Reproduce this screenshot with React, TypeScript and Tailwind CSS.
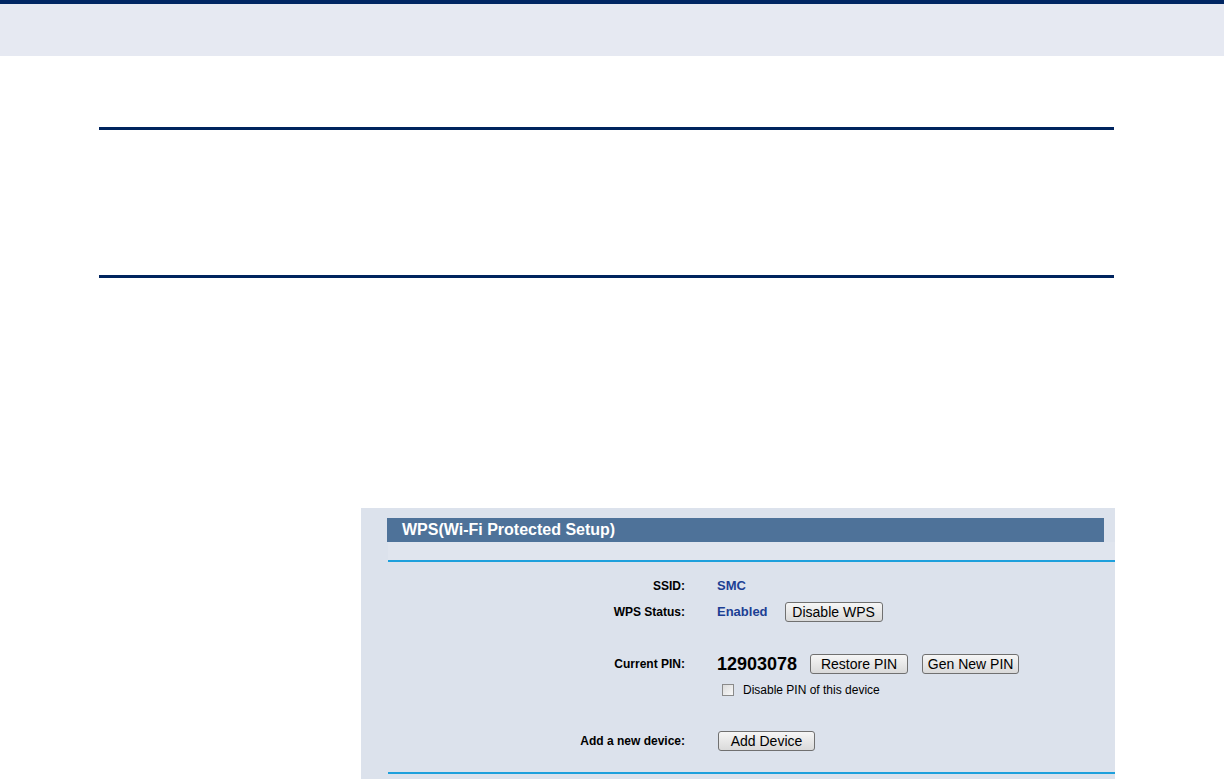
import React from 'react'

function Btn({ label, w }: { label: string; w: string }) {
  return (
    <button
      className={`${w} h-[20px] rounded-[3px] border border-[#707070] bg-gradient-to-b from-[#f6f6f6] to-[#dadada] text-[14px] leading-none text-black`}
    >
      {label}
    </button>
  )
}

function Row({ label, className, children }: { label: string; className: string; children?: React.ReactNode }) {
  return (
    <div className={`flex items-center ${className}`}>
      <div className="w-[324px] shrink-0 text-right text-[12px] font-bold text-black">{label}</div>
      <div className="ml-[32px] flex items-center">{children}</div>
    </div>
  )
}

export default function App() {
  return (
    <div className="min-h-[779px] bg-white font-['Liberation_Sans',Arial,sans-serif]">
      <div className="h-[4px] bg-[#002663]" />
      <div className="h-[52px] bg-[#e6e9f2]" />

      <div className="ml-[99px] mt-[71px] h-[3px] w-[1015px] bg-[#00245e]" />
      <div className="ml-[99px] mt-[145px] h-[3px] w-[1015px] bg-[#00245e]" />

      <div className="ml-[361px] mt-[230px] h-[271px] w-[754px] bg-[#dce2ec] pt-[10px]">
        <div className="ml-[26px] flex h-[24px] w-[717px] items-center bg-[#4e7299] pl-[15px] text-[16px] font-bold text-white">
          WPS(Wi-Fi Protected Setup)
        </div>
        <div className="ml-[27px] h-[18px] bg-[#e0e5ee]" />
        <div className="ml-[27px] h-[2px] bg-[#1ea0dc]" />

        <Row label="SSID:" className="mt-[14px] h-[20px]">
          <span className="text-[13px] font-bold text-[#1c3f94]">SMC</span>
        </Row>
        <Row label="WPS Status:" className="mt-[6px] h-[20px]">
          <span className="text-[13px] font-bold text-[#1c3f94]">Enabled</span>
          <span className="ml-[17px]">
            <Btn label="Disable WPS" w="w-[98px]" />
          </span>
        </Row>
        <Row label="Current PIN:" className="mt-[32px] h-[20px]">
          <span className="text-[18px] font-bold text-black">12903078</span>
          <span className="ml-[13px]">
            <Btn label="Restore PIN" w="w-[98px]" />
          </span>
          <span className="ml-[14px]">
            <Btn label="Gen New PIN" w="w-[97px]" />
          </span>
        </Row>
        <Row label="" className="mt-[7px] h-[18px]">
          <span className="ml-[5px] h-[12px] w-[12px] border border-[#8a8a8a] bg-gradient-to-br from-[#dcdcdc] to-[#f8f8f8]" />
          <span className="ml-[9px] text-[12px] text-black">Disable PIN of this device</span>
        </Row>
        <Row label="Add a new device:" className="mt-[32px] h-[20px]">
          <span className="ml-[1px]">
            <Btn label="Add Device" w="w-[97px]" />
          </span>
        </Row>
        <div className="ml-[27px] mt-[21px] h-[2px] bg-[#1ea0dc]" />
      </div>
    </div>
  )
}
